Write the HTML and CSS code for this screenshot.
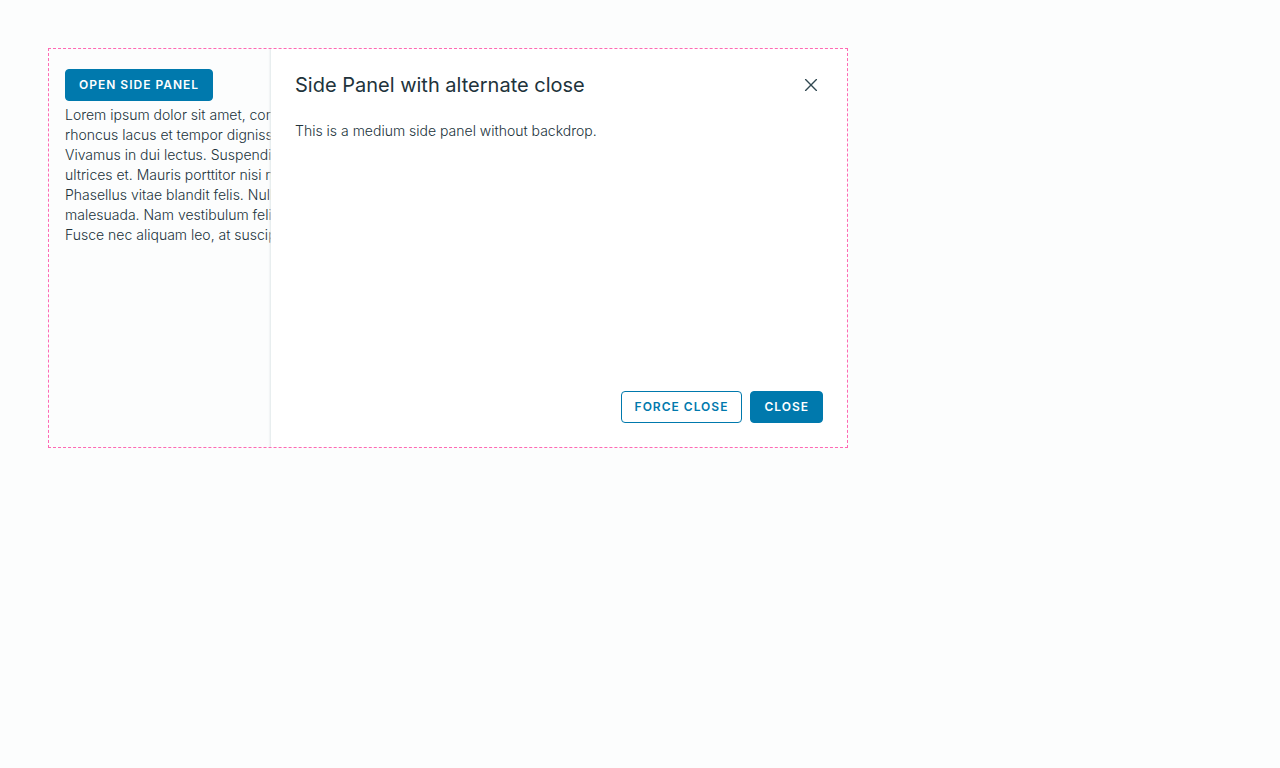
FILE: index.html
```html
<!DOCTYPE html>
<html lang="en">
<head>
<meta charset="utf-8">
<meta name="viewport" content="width=device-width, initial-scale=1">
<title>Side Panel</title>
<link rel="stylesheet" href="styles.css">
</head>
<body>
<main class="demo">
  <section class="content">
    <button class="btn btn-primary" type="button">Open side panel</button>
    <p class="copy">
      Lorem ipsum dolor sit amet, consectetur<br>
      rhoncus lacus et tempor dignissim.<br>
      Vivamus in dui lectus. Suspendisse<br>
      ultrices et. Mauris porttitor nisi nec<br>
      Phasellus vitae blandit felis. Nullam<br>
      malesuada. Nam vestibulum felis.<br>
      Fusce nec aliquam leo, at suscipit.
    </p>
  </section>
  <aside class="panel" role="dialog" aria-labelledby="panel-title">
    <header class="panel-header">
      <h1 class="panel-title" id="panel-title">Side Panel with alternate close</h1>
      <button class="close" type="button" aria-label="Close side panel">
        <svg class="close-icon" viewBox="0 0 24 24" aria-hidden="true"><path d="M5.5 5.5 18.5 18.5M18.5 5.5 5.5 18.5"/></svg>
      </button>
    </header>
    <div class="panel-body">This is a medium side panel without backdrop.</div>
    <footer class="panel-footer">
      <button class="btn btn-outline" type="button">Force close</button>
      <button class="btn btn-primary" type="button">Close</button>
    </footer>
  </aside>
</main>
</body>
</html>
```
FILE: styles.css
```css
* {
  box-sizing: border-box;
}

body {
  margin: 0;
  padding: 48px;
  background: #fcfdfd;
  color: #21333b;
  font: 300 14px/20px Inter, "Liberation Sans", sans-serif;
}

.demo {
  position: relative;
  max-width: 800px;
  min-height: 400px;
  border: 1px dashed hotpink;
  overflow: hidden;
}

.content {
  padding: 20px 16px;
}

.copy {
  margin: 4px 0 0;
  white-space: nowrap;
}

.btn {
  height: 32px;
  padding: 0 13px;
  border: 1px solid #0079ad;
  border-radius: 4px;
  font: 600 12px/16px Inter, "Liberation Sans", sans-serif;
  letter-spacing: 1px;
  text-transform: uppercase;
  white-space: nowrap;
}

.content .btn {
  display: block;
}

.btn-primary {
  background: #0079ad;
  color: #fff;
}

.btn-outline {
  background: transparent;
  color: #0079ad;
}

/* The panel slides over the page content. */
.panel {
  position: absolute;
  top: 0;
  right: 0;
  bottom: 0;
  display: flex;
  flex-direction: column;
  width: 576px;
  max-width: 100%;
  padding: 24px;
  background: #fff;
  box-shadow: 0 0 2px 1px #dfe6e8;
}

.panel-header {
  display: flex;
  align-items: center;
  justify-content: space-between;
  min-height: 24px;
}

.panel-title {
  margin: 0;
  font-size: 20px;
  font-weight: 400;
  line-height: 24px;
}

.close {
  display: flex;
  padding: 2px;
  border: 0;
  background: none;
  color: #314851;
}

.close-icon {
  width: 20px;
  height: 20px;
  fill: none;
  stroke: currentColor;
  stroke-width: 1.6;
  stroke-linecap: round;
}

.panel-body {
  flex: 1;
  padding-top: 24px;
}

.panel-footer {
  display: flex;
  justify-content: flex-end;
  gap: 8px;
}
```
